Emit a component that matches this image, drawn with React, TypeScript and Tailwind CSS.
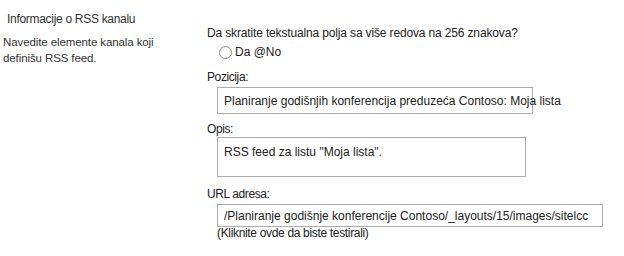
// App.tsx
// Sekcija "Informacije o RSS kanalu" iz podešavanja liste

const font = { fontFamily: '"Liberation Sans", Arial, sans-serif' }

export default function App() {
  return (
    <div className="w-[624px] h-[256px] bg-white text-[#222] flex overflow-hidden" style={font}>
      {/* Leva kolona */}
      <div className="w-[207px] shrink-0 pt-[11px]">
        <h2 className="pl-[7px] text-[12px] leading-[16px] text-[#333] tracking-[-0.3px]">Informacije o RSS kanalu</h2>
        <p className="pl-[3px] mt-[7px] text-[11.5px] leading-[16px] text-[#333] w-[170px] tracking-[-0.1px]">
          Navedite elemente kanala koji definišu RSS feed.
        </p>
      </div>

      {/* Desna kolona */}
      <div className="flex-1 pt-[25px] text-[12px]">
        <div className="leading-[16px] tracking-[-0.15px]">Da skratite tekstualna polja sa više redova na 256 znakova?</div>
        <div className="mt-[3px] pl-[12px] flex items-center gap-[3px] leading-[16px]">
          <span className="w-[13px] h-[13px] rounded-full border border-[#888] bg-white"></span>
          <span>Da @No</span>
        </div>

        <div className="mt-[9px] leading-[16px] tracking-[-0.4px]">Pozicija:</div>
        <div className="mt-[2px] ml-[10px] w-[316px] h-[27px] border border-[#ababab] flex items-center pl-[6px] whitespace-nowrap overflow-visible">
          Planiranje godišnjih konferencija preduzeća Contoso: Moja lista
        </div>

        <div className="mt-[7px] leading-[16px] tracking-[-0.4px]">Opis:</div>
        <div className="ml-[10px] w-[309px] h-[40px] border border-[#ababab] pl-[6px] pt-[6px] leading-[16px]">
          RSS feed za listu "Moja lista".
        </div>

        <div className="mt-[9px] leading-[16px] tracking-[-0.4px]">URL adresa:</div>
        <div className="mt-[2px] ml-[10px] w-[386px] h-[23px] border border-[#ababab] flex items-center pl-[6px] whitespace-nowrap overflow-hidden">
          /Planiranje godišnje konferencije Contoso/_layouts/15/images/sitelcc
        </div>
        <div className="-mt-[1px] ml-[10px] leading-[14px] tracking-[-0.33px]">(Kliknite ovde da biste testirali)</div>
      </div>
    </div>
  )
}
